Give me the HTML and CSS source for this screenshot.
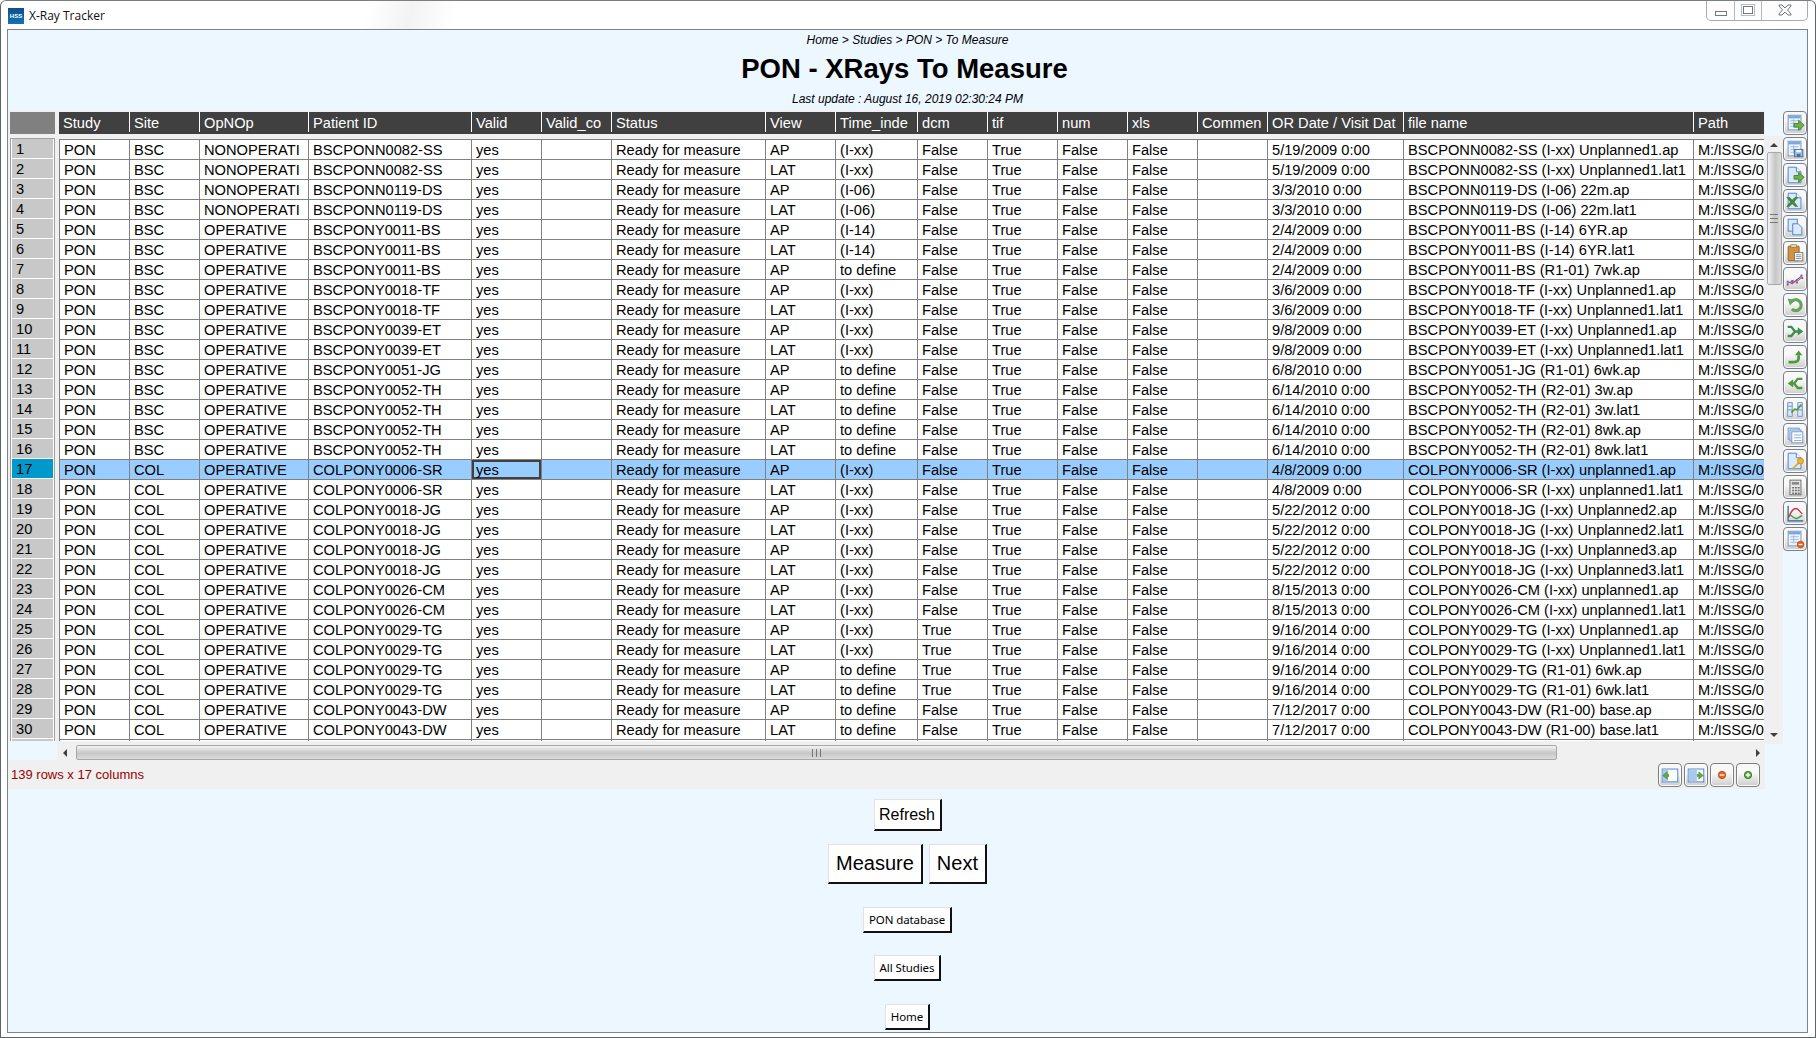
FILE: index.html
```html
<!DOCTYPE html>
<html lang="en">
  <head>
    <title>X-Ray Tracker</title>
    <link rel="stylesheet" href="styles.css">
  </head>
  <body>
    <svg class="defs" width="0" height="0">
      <symbol id="sheet" viewBox="0 0 24 24">
        <rect x="4.500" y="3.500" width="14" height="16" fill="#eef4fc" stroke="#6d93c6"/>
        <rect x="5" y="4" width="13" height="3" fill="#7fa7d8"/>
        <path d="M7 9.500h9M7 12.500h9M7 15.500h9M10.500 8v9" stroke="#9db7d8" fill="none"/>
      </symbol>
      <symbol id="page" viewBox="0 0 24 24">
        <path d="M4.500 3.500h9l5 5v12h-14z" fill="#dce9fa" stroke="#3f7fcc"/>
        <path d="M13.500 3.500v5h5" fill="#fff" stroke="#3f7fcc"/>
      </symbol>
      <symbol id="arrow" viewBox="0 0 24 24">
        <path d="M11 12.500h5v-3.500l6 5.500-6 5.500v-3.500h-5z" fill="#6db24a" stroke="#3f7f2c"/>
      </symbol>
    </svg>

    <div class="window">
      <div class="titlebar">
        <div class="app">
          <span class="logo">HSS</span>
          <span class="app-name">X-Ray Tracker</span>
        </div>
        <div class="controls">
          <span class="ctl ctl-min"><i></i></span>
          <span class="ctl ctl-max"><i></i></span>
          <span class="ctl ctl-close">
            <svg width="14" height="12" viewBox="0 0 14 12"><path d="M1 1h3l3 3 3-3h3v1l-3.500 4 3.500 4v1h-3l-3-3-3 3h-3v-1l3.500-4-3.500-4z" fill="#fff" stroke="#6f7780"/></svg>
          </span>
        </div>
      </div>

      <div class="client">
        <div class="page-head">
          <p class="crumbs">Home &gt; Studies &gt; PON &gt; To Measure</p>
          <h1>PON - XRays To Measure</h1>
          <p class="updated">Last update : August 16, 2019 02:30:24 PM</p>
        </div>

        <div class="workspace">
          <div class="grid-col">
            <div class="grid">
              <div class="rowheads">
                <div class="corner"></div>
                <div class="rowlist">
                  <div class="rowhead">1</div><div class="rowhead">2</div><div class="rowhead">3</div>
                  <div class="rowhead">4</div><div class="rowhead">5</div><div class="rowhead">6</div>
                  <div class="rowhead">7</div><div class="rowhead">8</div><div class="rowhead">9</div>
                  <div class="rowhead">10</div><div class="rowhead">11</div><div class="rowhead">12</div>
                  <div class="rowhead">13</div><div class="rowhead">14</div><div class="rowhead">15</div>
                  <div class="rowhead">16</div><div class="rowhead rowhead-sel">17</div><div class="rowhead">18</div>
                  <div class="rowhead">19</div><div class="rowhead">20</div><div class="rowhead">21</div>
                  <div class="rowhead">22</div><div class="rowhead">23</div><div class="rowhead">24</div>
                  <div class="rowhead">25</div><div class="rowhead">26</div><div class="rowhead">27</div>
                  <div class="rowhead">28</div><div class="rowhead">29</div><div class="rowhead">30</div>
                  <div class="rowhead"></div>
                </div>
              </div>
              <table class="data">
                <colgroup>
                  <col class="c71"><col class="c70"><col class="c109"><col class="c163"><col class="c70"><col class="c70"><col class="c154"><col class="c70"><col class="c82"><col class="c70"><col class="c70"><col class="c70"><col class="c70"><col class="c70"><col class="c136"><col class="c290"><col class="c70">
                </colgroup>
                <thead>
                  <tr><th>Study</th><th>Site</th><th>OpNOp</th><th>Patient ID</th><th>Valid</th><th>Valid_co</th><th>Status</th><th>View</th><th>Time_inde</th><th>dcm</th><th>tif</th><th>num</th><th>xls</th><th>Commen</th><th>OR Date / Visit Dat</th><th>file name</th><th>Path</th></tr>
                </thead>
                <tbody>
                  <tr><td>PON</td><td>BSC</td><td>NONOPERATI</td><td>BSCPONN0082-SS</td><td>yes</td><td></td><td>Ready for measure</td><td>AP</td><td>(I-xx)</td><td>False</td><td>True</td><td>False</td><td>False</td><td></td><td>5/19/2009 0:00</td><td>BSCPONN0082-SS (I-xx) Unplanned1.ap</td><td>M:/ISSG/0</td></tr>
                  <tr><td>PON</td><td>BSC</td><td>NONOPERATI</td><td>BSCPONN0082-SS</td><td>yes</td><td></td><td>Ready for measure</td><td>LAT</td><td>(I-xx)</td><td>False</td><td>True</td><td>False</td><td>False</td><td></td><td>5/19/2009 0:00</td><td>BSCPONN0082-SS (I-xx) Unplanned1.lat1</td><td>M:/ISSG/0</td></tr>
                  <tr><td>PON</td><td>BSC</td><td>NONOPERATI</td><td>BSCPONN0119-DS</td><td>yes</td><td></td><td>Ready for measure</td><td>AP</td><td>(I-06)</td><td>False</td><td>True</td><td>False</td><td>False</td><td></td><td>3/3/2010 0:00</td><td>BSCPONN0119-DS (I-06) 22m.ap</td><td>M:/ISSG/0</td></tr>
                  <tr><td>PON</td><td>BSC</td><td>NONOPERATI</td><td>BSCPONN0119-DS</td><td>yes</td><td></td><td>Ready for measure</td><td>LAT</td><td>(I-06)</td><td>False</td><td>True</td><td>False</td><td>False</td><td></td><td>3/3/2010 0:00</td><td>BSCPONN0119-DS (I-06) 22m.lat1</td><td>M:/ISSG/0</td></tr>
                  <tr><td>PON</td><td>BSC</td><td>OPERATIVE</td><td>BSCPONY0011-BS</td><td>yes</td><td></td><td>Ready for measure</td><td>AP</td><td>(I-14)</td><td>False</td><td>True</td><td>False</td><td>False</td><td></td><td>2/4/2009 0:00</td><td>BSCPONY0011-BS (I-14) 6YR.ap</td><td>M:/ISSG/0</td></tr>
                  <tr><td>PON</td><td>BSC</td><td>OPERATIVE</td><td>BSCPONY0011-BS</td><td>yes</td><td></td><td>Ready for measure</td><td>LAT</td><td>(I-14)</td><td>False</td><td>True</td><td>False</td><td>False</td><td></td><td>2/4/2009 0:00</td><td>BSCPONY0011-BS (I-14) 6YR.lat1</td><td>M:/ISSG/0</td></tr>
                  <tr><td>PON</td><td>BSC</td><td>OPERATIVE</td><td>BSCPONY0011-BS</td><td>yes</td><td></td><td>Ready for measure</td><td>AP</td><td>to define</td><td>False</td><td>True</td><td>False</td><td>False</td><td></td><td>2/4/2009 0:00</td><td>BSCPONY0011-BS (R1-01) 7wk.ap</td><td>M:/ISSG/0</td></tr>
                  <tr><td>PON</td><td>BSC</td><td>OPERATIVE</td><td>BSCPONY0018-TF</td><td>yes</td><td></td><td>Ready for measure</td><td>AP</td><td>(I-xx)</td><td>False</td><td>True</td><td>False</td><td>False</td><td></td><td>3/6/2009 0:00</td><td>BSCPONY0018-TF (I-xx) Unplanned1.ap</td><td>M:/ISSG/0</td></tr>
                  <tr><td>PON</td><td>BSC</td><td>OPERATIVE</td><td>BSCPONY0018-TF</td><td>yes</td><td></td><td>Ready for measure</td><td>LAT</td><td>(I-xx)</td><td>False</td><td>True</td><td>False</td><td>False</td><td></td><td>3/6/2009 0:00</td><td>BSCPONY0018-TF (I-xx) Unplanned1.lat1</td><td>M:/ISSG/0</td></tr>
                  <tr><td>PON</td><td>BSC</td><td>OPERATIVE</td><td>BSCPONY0039-ET</td><td>yes</td><td></td><td>Ready for measure</td><td>AP</td><td>(I-xx)</td><td>False</td><td>True</td><td>False</td><td>False</td><td></td><td>9/8/2009 0:00</td><td>BSCPONY0039-ET (I-xx) Unplanned1.ap</td><td>M:/ISSG/0</td></tr>
                  <tr><td>PON</td><td>BSC</td><td>OPERATIVE</td><td>BSCPONY0039-ET</td><td>yes</td><td></td><td>Ready for measure</td><td>LAT</td><td>(I-xx)</td><td>False</td><td>True</td><td>False</td><td>False</td><td></td><td>9/8/2009 0:00</td><td>BSCPONY0039-ET (I-xx) Unplanned1.lat1</td><td>M:/ISSG/0</td></tr>
                  <tr><td>PON</td><td>BSC</td><td>OPERATIVE</td><td>BSCPONY0051-JG</td><td>yes</td><td></td><td>Ready for measure</td><td>AP</td><td>to define</td><td>False</td><td>True</td><td>False</td><td>False</td><td></td><td>6/8/2010 0:00</td><td>BSCPONY0051-JG (R1-01) 6wk.ap</td><td>M:/ISSG/0</td></tr>
                  <tr><td>PON</td><td>BSC</td><td>OPERATIVE</td><td>BSCPONY0052-TH</td><td>yes</td><td></td><td>Ready for measure</td><td>AP</td><td>to define</td><td>False</td><td>True</td><td>False</td><td>False</td><td></td><td>6/14/2010 0:00</td><td>BSCPONY0052-TH (R2-01) 3w.ap</td><td>M:/ISSG/0</td></tr>
                  <tr><td>PON</td><td>BSC</td><td>OPERATIVE</td><td>BSCPONY0052-TH</td><td>yes</td><td></td><td>Ready for measure</td><td>LAT</td><td>to define</td><td>False</td><td>True</td><td>False</td><td>False</td><td></td><td>6/14/2010 0:00</td><td>BSCPONY0052-TH (R2-01) 3w.lat1</td><td>M:/ISSG/0</td></tr>
                  <tr><td>PON</td><td>BSC</td><td>OPERATIVE</td><td>BSCPONY0052-TH</td><td>yes</td><td></td><td>Ready for measure</td><td>AP</td><td>to define</td><td>False</td><td>True</td><td>False</td><td>False</td><td></td><td>6/14/2010 0:00</td><td>BSCPONY0052-TH (R2-01) 8wk.ap</td><td>M:/ISSG/0</td></tr>
                  <tr><td>PON</td><td>BSC</td><td>OPERATIVE</td><td>BSCPONY0052-TH</td><td>yes</td><td></td><td>Ready for measure</td><td>LAT</td><td>to define</td><td>False</td><td>True</td><td>False</td><td>False</td><td></td><td>6/14/2010 0:00</td><td>BSCPONY0052-TH (R2-01) 8wk.lat1</td><td>M:/ISSG/0</td></tr>
                  <tr class="selected"><td>PON</td><td>COL</td><td>OPERATIVE</td><td>COLPONY0006-SR</td><td class="focus">yes</td><td></td><td>Ready for measure</td><td>AP</td><td>(I-xx)</td><td>False</td><td>True</td><td>False</td><td>False</td><td></td><td>4/8/2009 0:00</td><td>COLPONY0006-SR (I-xx) unplanned1.ap</td><td>M:/ISSG/0</td></tr>
                  <tr><td>PON</td><td>COL</td><td>OPERATIVE</td><td>COLPONY0006-SR</td><td>yes</td><td></td><td>Ready for measure</td><td>LAT</td><td>(I-xx)</td><td>False</td><td>True</td><td>False</td><td>False</td><td></td><td>4/8/2009 0:00</td><td>COLPONY0006-SR (I-xx) unplanned1.lat1</td><td>M:/ISSG/0</td></tr>
                  <tr><td>PON</td><td>COL</td><td>OPERATIVE</td><td>COLPONY0018-JG</td><td>yes</td><td></td><td>Ready for measure</td><td>AP</td><td>(I-xx)</td><td>False</td><td>True</td><td>False</td><td>False</td><td></td><td>5/22/2012 0:00</td><td>COLPONY0018-JG (I-xx) Unplanned2.ap</td><td>M:/ISSG/0</td></tr>
                  <tr><td>PON</td><td>COL</td><td>OPERATIVE</td><td>COLPONY0018-JG</td><td>yes</td><td></td><td>Ready for measure</td><td>LAT</td><td>(I-xx)</td><td>False</td><td>True</td><td>False</td><td>False</td><td></td><td>5/22/2012 0:00</td><td>COLPONY0018-JG (I-xx) Unplanned2.lat1</td><td>M:/ISSG/0</td></tr>
                  <tr><td>PON</td><td>COL</td><td>OPERATIVE</td><td>COLPONY0018-JG</td><td>yes</td><td></td><td>Ready for measure</td><td>AP</td><td>(I-xx)</td><td>False</td><td>True</td><td>False</td><td>False</td><td></td><td>5/22/2012 0:00</td><td>COLPONY0018-JG (I-xx) Unplanned3.ap</td><td>M:/ISSG/0</td></tr>
                  <tr><td>PON</td><td>COL</td><td>OPERATIVE</td><td>COLPONY0018-JG</td><td>yes</td><td></td><td>Ready for measure</td><td>LAT</td><td>(I-xx)</td><td>False</td><td>True</td><td>False</td><td>False</td><td></td><td>5/22/2012 0:00</td><td>COLPONY0018-JG (I-xx) Unplanned3.lat1</td><td>M:/ISSG/0</td></tr>
                  <tr><td>PON</td><td>COL</td><td>OPERATIVE</td><td>COLPONY0026-CM</td><td>yes</td><td></td><td>Ready for measure</td><td>AP</td><td>(I-xx)</td><td>False</td><td>True</td><td>False</td><td>False</td><td></td><td>8/15/2013 0:00</td><td>COLPONY0026-CM (I-xx) unplanned1.ap</td><td>M:/ISSG/0</td></tr>
                  <tr><td>PON</td><td>COL</td><td>OPERATIVE</td><td>COLPONY0026-CM</td><td>yes</td><td></td><td>Ready for measure</td><td>LAT</td><td>(I-xx)</td><td>False</td><td>True</td><td>False</td><td>False</td><td></td><td>8/15/2013 0:00</td><td>COLPONY0026-CM (I-xx) unplanned1.lat1</td><td>M:/ISSG/0</td></tr>
                  <tr><td>PON</td><td>COL</td><td>OPERATIVE</td><td>COLPONY0029-TG</td><td>yes</td><td></td><td>Ready for measure</td><td>AP</td><td>(I-xx)</td><td>True</td><td>True</td><td>False</td><td>False</td><td></td><td>9/16/2014 0:00</td><td>COLPONY0029-TG (I-xx) Unplanned1.ap</td><td>M:/ISSG/0</td></tr>
                  <tr><td>PON</td><td>COL</td><td>OPERATIVE</td><td>COLPONY0029-TG</td><td>yes</td><td></td><td>Ready for measure</td><td>LAT</td><td>(I-xx)</td><td>True</td><td>True</td><td>False</td><td>False</td><td></td><td>9/16/2014 0:00</td><td>COLPONY0029-TG (I-xx) Unplanned1.lat1</td><td>M:/ISSG/0</td></tr>
                  <tr><td>PON</td><td>COL</td><td>OPERATIVE</td><td>COLPONY0029-TG</td><td>yes</td><td></td><td>Ready for measure</td><td>AP</td><td>to define</td><td>True</td><td>True</td><td>False</td><td>False</td><td></td><td>9/16/2014 0:00</td><td>COLPONY0029-TG (R1-01) 6wk.ap</td><td>M:/ISSG/0</td></tr>
                  <tr><td>PON</td><td>COL</td><td>OPERATIVE</td><td>COLPONY0029-TG</td><td>yes</td><td></td><td>Ready for measure</td><td>LAT</td><td>to define</td><td>True</td><td>True</td><td>False</td><td>False</td><td></td><td>9/16/2014 0:00</td><td>COLPONY0029-TG (R1-01) 6wk.lat1</td><td>M:/ISSG/0</td></tr>
                  <tr><td>PON</td><td>COL</td><td>OPERATIVE</td><td>COLPONY0043-DW</td><td>yes</td><td></td><td>Ready for measure</td><td>AP</td><td>to define</td><td>False</td><td>True</td><td>False</td><td>False</td><td></td><td>7/12/2017 0:00</td><td>COLPONY0043-DW (R1-00) base.ap</td><td>M:/ISSG/0</td></tr>
                  <tr><td>PON</td><td>COL</td><td>OPERATIVE</td><td>COLPONY0043-DW</td><td>yes</td><td></td><td>Ready for measure</td><td>LAT</td><td>to define</td><td>False</td><td>True</td><td>False</td><td>False</td><td></td><td>7/12/2017 0:00</td><td>COLPONY0043-DW (R1-00) base.lat1</td><td>M:/ISSG/0</td></tr>
                  <tr class="cut"><td></td><td></td><td></td><td></td><td></td><td></td><td></td><td></td><td></td><td></td><td></td><td></td><td></td><td></td><td></td><td></td><td></td></tr>
                </tbody>
              </table>
            </div>

            <div class="hscroll">
              <div class="hbar">
                <span class="tri tri-left"></span>
                <div class="hthumb"><span class="grip-v"></span></div>
                <span class="tri tri-right"></span>
              </div>
            </div>

            <div class="statusbar">
              <span class="count">139 rows x 17 columns</span>
              <div class="status-tools">
                <button class="tool"><svg class="ico" viewBox="0 0 24 24"><rect x="3.500" y="5.500" width="17" height="14" fill="#fff" stroke="#3f7fcc"/><rect x="4" y="6" width="6" height="13" fill="#a9c9ee"/><path d="M9 8.500v8l-5-4z" fill="#5fa93f" stroke="#3f7f2c" stroke-width=".5"/><path d="M8 11h3v3H8z" fill="#5fa93f"/></svg></button>
                <button class="tool"><svg class="ico" viewBox="0 0 24 24"><rect x="3.500" y="5.500" width="17" height="14" fill="#fff" stroke="#3f7fcc"/><rect x="4" y="6" width="9" height="13" fill="#a9c9ee"/><path d="M15 8.500v8l5-4z" fill="#5fa93f" stroke="#3f7f2c" stroke-width=".5"/><path d="M13 11h3v3h-3z" fill="#5fa93f"/></svg></button>
                <button class="tool"><svg class="ico" viewBox="0 0 24 24"><circle cx="12" cy="12" r="4" fill="#e8641c" stroke="#c04a10"/><path d="M9.500 12h5" stroke="#fff" stroke-width="1.500"/></svg></button>
                <button class="tool"><svg class="ico" viewBox="0 0 24 24"><circle cx="12" cy="12" r="4" fill="#5aa63c" stroke="#3c7a2a"/><path d="M9.500 12h5M12 9.500v5" stroke="#fff" stroke-width="1.500"/></svg></button>
              </div>
            </div>
          </div>

          <div class="vscroll">
            <span class="tri tri-up"></span>
            <div class="vthumb"><span class="grip-h"></span></div>
            <span class="tri tri-down"></span>
          </div>

          <div class="toolbar">
            <button class="tool"><svg class="ico" viewBox="0 0 24 24"><use href="#sheet"/><use href="#arrow"/></svg></button>
            <button class="tool"><svg class="ico" viewBox="0 0 24 24"><use href="#sheet"/><rect x="11.500" y="12.500" width="9" height="8" fill="#9db9dd" stroke="#3f6ea8"/><rect x="13.500" y="13" width="5" height="2.500" fill="#fff"/><rect x="14" y="17.500" width="4" height="3" fill="#3f6ea8"/></svg></button>
            <button class="tool"><svg class="ico" viewBox="0 0 24 24"><use href="#page"/><use href="#arrow"/></svg></button>
            <button class="tool"><svg class="ico" viewBox="0 0 24 24"><use href="#page"/><path d="M3 8h3l3 3 3-3h3l-4 5 4 5h-3l-3-3-3 3H3l4-5z" fill="#3f8a3a" stroke="#2f6f2a" stroke-width=".5"/></svg></button>
            <button class="tool"><svg class="ico" viewBox="0 0 24 24"><rect x="4.500" y="3.500" width="10" height="13" fill="#dce9fa" stroke="#3f7fcc"/><path d="M9.500 8.500h6l4 4v8h-10z" fill="#dce9fa" stroke="#3f7fcc"/></svg></button>
            <button class="tool"><svg class="ico" viewBox="0 0 24 24"><rect x="4.500" y="4.500" width="12" height="16" rx="1" fill="#cf9347" stroke="#8f5f22"/><rect x="7.500" y="3" width="6" height="3" fill="#e8d2a8" stroke="#8f5f22" stroke-width=".6"/><rect x="11.500" y="11.500" width="9" height="9" fill="#fff" stroke="#777"/><path d="M13 14h6M13 16h6M13 18h6" stroke="#888"/></svg></button>
            <button class="tool"><svg class="ico" viewBox="0 0 24 24"><path d="M4 15l5 2 5-4 6-5" fill="none" stroke="#d8324a" stroke-width="1.300"/><path d="M4 17l5-3 5 1 6-5" fill="none" stroke="#3f7fcc" stroke-width="1"/><path d="M3 14h2v2H3zM8 15h2v2H8zM13 12h2v2h-2zM18 7h2v2h-2z" fill="#3f7fcc"/><path d="M3 17h2v2H3zM8 13h2v2H8zM13 15h2v2h-2zM19 10h2v2h-2z" fill="#d8324a"/></svg></button>
            <button class="tool"><svg class="ico" viewBox="0 0 24 24"><path d="M8 8.500a6 6 0 1 1 .5 8" fill="none" stroke="#63a45c" stroke-width="3.500"/><path d="M4 5l8 1.500-5.500 6z" fill="#63a45c"/></svg></button>
            <button class="tool"><svg class="ico" viewBox="0 0 24 24"><path d="M4 7.500h4l4 5-4 5H4M12 12.500h4" fill="none" stroke="#3f8f4a" stroke-width="2.600"/><path d="M15 8l6 4.500-6 4.500z" fill="#3f8f4a"/></svg></button>
            <button class="tool"><svg class="ico" viewBox="0 0 24 24"><path d="M5 17.500h6c3 0 5-2 5-5V10" fill="none" stroke="#4f9a3f" stroke-width="3"/><path d="M12 10l4-5 4 5z" fill="#4f9a3f"/></svg></button>
            <button class="tool"><svg class="ico" viewBox="0 0 24 24"><path d="M20 7.500h-5l-4 5 4 5h5M12 12.500H9" fill="none" stroke="#4f9a3f" stroke-width="2.600"/><path d="M10 8l-6 4.500 6 4.500z" fill="#4f9a3f"/></svg></button>
            <button class="tool"><svg class="ico" viewBox="0 0 24 24"><path d="M4 5h5v15H4zM15 5h5v15h-5z" fill="#dce9fa" stroke="#6d93c6"/><path d="M4 9h5M4 13h5M15 9h5M15 13h5" stroke="#6d93c6"/><path d="M8 16l4-4 2 1 5-6" fill="none" stroke="#4f9a3f" stroke-width="1.800"/></svg></button>
            <button class="tool"><svg class="ico" viewBox="0 0 24 24"><rect x="4.500" y="4.500" width="12" height="12" fill="#e4eefa" stroke="#6d93c6"/><rect x="6.500" y="6.500" width="12" height="12" fill="#e4eefa" stroke="#6d93c6"/><rect x="8.500" y="8.500" width="12" height="12" fill="#fff" stroke="#6d93c6"/><path d="M11 12h8M11 15h8M11 18h8" stroke="#7fa7d8"/></svg></button>
            <button class="tool"><svg class="ico" viewBox="0 0 24 24"><use href="#page"/><path d="M10 20l6-6" stroke="#e8a820" stroke-width="2"/><circle cx="18" cy="12" r="3.200" fill="#f0b830" stroke="#c88a10"/></svg></button>
            <button class="tool"><svg class="ico" viewBox="0 0 24 24"><rect x="6.500" y="4.500" width="12" height="16" fill="#e8e8e8" stroke="#666"/><rect x="8.500" y="6.500" width="8" height="3" fill="#8a8a8a"/><path d="M9 12h2v1.500H9zM12 12h2v1.500h-2zM15 12h2v1.500h-2zM9 15h2v1.500H9zM12 15h2v1.500h-2zM15 15h2v1.500h-2zM9 18h2v1.500H9zM12 18h2v1.500h-2zM15 18h2v1.500h-2z" fill="#666"/></svg></button>
            <button class="tool"><svg class="ico" viewBox="0 0 24 24"><path d="M4.500 4v16.500H21" fill="none" stroke="#2f5fb0" stroke-width="1.400"/><path d="M5 17c3-8 5-10 8-10s4 4 7 6" fill="none" stroke="#d8324a" stroke-width="1.600"/><path d="M5 14c4 0 6 5 9 4s4-3 6-3" fill="none" stroke="#4f9a3f" stroke-width="1.600"/></svg></button>
            <button class="tool"><svg class="ico" viewBox="0 0 24 24"><use href="#sheet"/><circle cx="18" cy="18" r="3.500" fill="#e8641c" stroke="#c04a10"/><path d="M16 18h4" stroke="#fff" stroke-width="1.400"/></svg></button>
          </div>
        </div>

        <div class="actions">
          <button class="btn btn-refresh">Refresh</button>
          <div class="btn-row">
            <button class="btn btn-big">Measure</button>
            <button class="btn btn-big">Next</button>
          </div>
          <button class="btn btn-small">PON database</button>
          <button class="btn btn-small btn-studies">All Studies</button>
          <button class="btn btn-small">Home</button>
        </div>
      </div>
    </div>
  </body>
</html>
```

FILE: styles.css
```css
html, body {
  margin: 0;
  height: 100%;
  overflow: hidden;
}

body {
  font-family: "Liberation Sans", Arial, sans-serif;
  color: #000;
}

.defs {
  display: block;
  height: 0;
}

.window {
  box-sizing: border-box;
  width: 1816px;
  height: 1038px;
  padding: 0 7px 6px 6px;
  border: 1px solid #5f6468;
  border-top-color: #7a7f84;
  border-radius: 6px 6px 0 0;
  background: #fff;
}

/* title bar */
.titlebar {
  display: flex;
  justify-content: space-between;
  align-items: flex-start;
  height: 28px;
  background: linear-gradient(105deg, #fff 20%, #f3f3f3 22.500%, #fff 25%);
}

.app {
  display: flex;
  align-items: center;
  gap: 5px;
  padding: 6px 0 0 1px;
}

.logo {
  width: 16px;
  height: 16px;
  background: linear-gradient(#0f4f8a, #1373b5);
  color: #fff;
  font-size: 6px;
  font-weight: bold;
  line-height: 16px;
  text-align: center;
}

.app-name {
  font-family: "Open Sans", sans-serif;
  font-size: 12px;
  color: #111;
}

.controls {
  display: flex;
  height: 19px;
  border: 1px solid #a9adb2;
  border-top: 0;
  border-radius: 0 0 5px 5px;
  background: #fdfdfd;
}

.ctl {
  display: flex;
  justify-content: center;
  align-items: center;
  border-right: 1px solid #b4b8bc;
}

.ctl-min {
  width: 27px;
}

.ctl-min i {
  width: 10px;
  height: 3px;
  margin-top: 5px;
  border: 1px solid #6f7780;
  background: #fff;
}

.ctl-max {
  width: 26px;
}

.ctl-max i {
  width: 8px;
  height: 6px;
  margin-bottom: 2px;
  border: 1px solid #6f7780;
  outline: 1px solid #b9bec4;
  outline-offset: 1px;
  background: #fff;
}

.ctl-close {
  width: 45px;
  border-right: 0;
  padding-bottom: 1px;
}

/* client area */
.client {
  display: flex;
  flex-direction: column;
  height: 1002px;
  border: 1px solid #7f8488;
  background: #ecf7ff;
  overflow: hidden;
}

.page-head {
  height: 80px;
  text-align: center;
}

.crumbs {
  margin: 0;
  font-size: 12px;
  font-style: italic;
  line-height: 20px;
}

h1 {
  margin: 0;
  padding-right: 6px;
  font-size: 27.500px;
  line-height: 38px;
}

.updated {
  margin: 0;
  font-size: 12px;
  font-style: italic;
  line-height: 22px;
}

.workspace {
  display: flex;
  height: 679px;
}

.grid-col {
  display: flex;
  flex-direction: column;
  width: 1757px;
}

/* table */
.grid {
  display: flex;
  box-sizing: border-box;
  height: 631px;
  padding: 2px 2px 0;
  background: #f0f0f0;
  overflow: hidden;
}

.rowheads {
  flex: none;
  width: 45px;
  margin-right: 4px;
}

.corner {
  height: 22px;
  margin-bottom: 4px;
  background: #808080;
}

.rowlist {
  border: 1px solid #a0a0a0;
  border-bottom: 0;
  background: #fff;
}

.rowhead {
  box-sizing: border-box;
  height: 20px;
  padding: 2px 0 0 4px;
  border-width: 0 1px 1px;
  border-style: solid;
  border-color: #fff;
  background: #c8c8c8;
  font-size: 14.667px;
  line-height: 17px;
}

.rowhead-sel {
  background: #0099cc;
}

.data {
  flex: none;
  width: 1704px;
  table-layout: fixed;
  border-collapse: separate;
  border-spacing: 0;
  font-size: 14.667px;
}

.c70 { width: 70px; }
.c71 { width: 71px; }
.c82 { width: 82px; }
.c109 { width: 109px; }
.c136 { width: 136px; }
.c154 { width: 154px; }
.c163 { width: 163px; }
.c290 { width: 290px; }

th, td {
  box-sizing: border-box;
  padding: 0 0 0 4px;
  overflow: hidden;
  white-space: nowrap;
  font-weight: normal;
  text-align: left;
}

th {
  height: 27px;
  border-bottom: 5px solid #f0f0f0;
  background: linear-gradient(#fff, #fff) right top / 1px 20px no-repeat #404040;
  color: #fff;
}

th:last-child {
  background: #404040;
}

td {
  height: 20px;
  padding-top: 1px;
  line-height: 18px;
  border-right: 1px solid #808080;
  border-bottom: 1px solid #808080;
  background: #fff;
}

td:first-child {
  border-left: 1px solid #808080;
}

td:last-child {
  border-right: 0;
  letter-spacing: -0.2px;
}

tbody tr:first-child td {
  height: 21px;
  border-top: 1px solid #808080;
}

.selected td {
  background: #99ccff;
}

.selected .focus {
  box-shadow: inset 0 0 0 2px #404040;
}

/* scrollbars */
.hscroll {
  box-sizing: border-box;
  height: 19px;
  margin-left: 49px;
  padding-top: 4px;
  background: #f0f0f0;
}

.hbar {
  display: flex;
  align-items: center;
  height: 15px;
  padding: 0 5px 0 6px;
  gap: 9px;
  background: #f0f0f0;
}

.hthumb {
  display: flex;
  justify-content: center;
  align-items: center;
  box-sizing: border-box;
  width: 1481px;
  height: 15px;
  border: 1px solid #a8a8a8;
  border-radius: 2px;
  background: linear-gradient(#f4f4f4, #c6c6c6 55%, #dcdcdc);
}

.hbar .tri-right {
  margin-left: auto;
}

.vscroll {
  box-sizing: border-box;
  display: flex;
  flex-direction: column;
  align-items: center;
  gap: 5px;
  width: 18px;
  height: 608px;
  margin-top: 26px;
  padding-top: 7px;
  background: #f0f0f0;
}

.vthumb {
  display: flex;
  justify-content: center;
  align-items: center;
  box-sizing: border-box;
  flex: none;
  width: 15px;
  height: 133px;
  border: 1px solid #a8a8a8;
  border-radius: 2px;
  background: linear-gradient(90deg, #f4f4f4, #c6c6c6 55%, #dcdcdc);
}

.vscroll .tri-down {
  margin-top: auto;
  margin-bottom: 7px;
}

.tri {
  flex: none;
  width: 0;
  height: 0;
  border: 4px solid transparent;
}

.tri-up {
  border-top: 0;
  border-bottom-color: #404040;
}

.tri-down {
  border-bottom: 0;
  border-top-color: #404040;
}

.tri-left {
  border-left: 0;
  border-right-color: #404040;
}

.tri-right {
  border-right: 0;
  border-left-color: #404040;
}

.grip-h {
  width: 8px;
  height: 7px;
  border-top: 1px solid #777;
  border-bottom: 1px solid #777;
  background: linear-gradient(#777, #777) center / 100% 1px no-repeat;
}

.grip-v {
  width: 7px;
  height: 8px;
  border-left: 1px solid #777;
  border-right: 1px solid #777;
  background: linear-gradient(#777, #777) center / 1px 100% no-repeat;
}

/* status bar */
.statusbar {
  display: flex;
  justify-content: space-between;
  align-items: center;
  height: 29px;
  padding: 0 5px 0 3px;
  background: #f0f0f0;
}

.count {
  font-size: 13px;
  color: #990000;
}

.status-tools {
  display: flex;
  gap: 2px;
}

/* icon buttons */
.toolbar {
  display: flex;
  flex-direction: column;
  gap: 2px;
  width: 24px;
  padding-top: 1px;
}

.tool {
  box-sizing: border-box;
  display: block;
  flex: none;
  width: 24px;
  height: 24px;
  padding: 0;
  border: 1px solid #7f7f7f;
  border-radius: 4px;
  box-shadow: inset 0 0 0 1px #fafafa;
  background: linear-gradient(#f8f8f8 40%, #cdcdcd);
}

.ico {
  display: block;
  width: 22px;
  height: 22px;
}

/* page buttons */
.actions {
  display: flex;
  flex-direction: column;
  align-items: center;
  padding-top: 10px;
}

.btn {
  box-sizing: border-box;
  padding: 0;
  border-style: solid;
  border-width: 1px 2px 2px 1px;
  border-color: #e2e2e2 #111 #111 #e2e2e2;
  background: #fff;
  color: #000;
  font-family: "Liberation Sans", Arial, sans-serif;
}

.btn-refresh {
  width: 68px;
  height: 32px;
  font-size: 16px;
}

.btn-row {
  display: flex;
  gap: 6px;
  margin-top: 13px;
}

.btn-big {
  height: 40px;
  padding: 0 7px;
  font-size: 20px;
}

.btn-small {
  height: 26px;
  margin-top: 23px;
  padding: 0 5px;
  font-family: "Noto Sans", sans-serif;
  font-size: 11.500px;
  letter-spacing: -0.1px;
}

.btn-studies {
  margin-top: 22px;
}
```
